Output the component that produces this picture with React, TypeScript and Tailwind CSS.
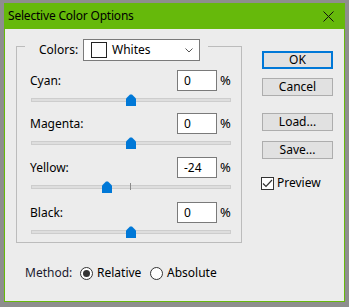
import React from 'react';

const font = { fontFamily: '"Noto Sans", "Open Sans", sans-serif' };

const rows = [
  { label: 'Cyan:', value: 0, mt: 'mt-[9px]', tick: false },
  { label: 'Magenta:', value: 0, mt: 'mt-[7px]', tick: false },
  { label: 'Yellow:', value: -24, mt: 'mt-[8px]', tick: true },
  { label: 'Black:', value: 0, mt: 'mt-[9px]', tick: false },
];

function Slider({ value, tick }: { value: number; tick: boolean }) {
  const pct = (value + 100) / 2;
  return (
    <div className="relative mt-[3px] ml-[1px] h-[12px] w-[200px]">
      <div className="absolute left-0 right-0 top-[4px] h-[4px] border border-[#cdcdcd] bg-[#dedede]" />
      {tick && <div className="absolute left-[99px] top-[2px] h-[7px] w-px bg-[#8a8a8a]" />}
      <svg
        className="absolute top-0"
        style={{ left: `calc(${pct}% - 5px)` }}
        width="10"
        height="12"
        viewBox="0 0 10 12"
      >
        <path d="M0 4.5 L4 0.5 H6 L10 4.5 V12 H0 Z" fill="#0078d7" />
      </svg>
    </div>
  );
}

function Radio({ checked }: { checked: boolean }) {
  return (
    <div className="flex h-[13px] w-[13px] items-center justify-center rounded-full border border-[#333333] bg-white">
      {checked && <div className="h-[7px] w-[7px] rounded-full bg-[#333333]" />}
    </div>
  );
}

function Button({ label, primary }: { label: string; primary?: boolean }) {
  return (
    <div
      className={
        primary
          ? 'flex h-[18px] w-[71px] items-center justify-center border-2 border-[#0078d7] bg-[#e1e1e1] text-[12px] text-black'
          : 'flex h-[18px] w-[71px] items-center justify-center border border-[#adadad] bg-[#e1e1e1] text-[12px] text-black'
      }
    >
      {label}
    </div>
  );
}

export default function App() {
  return (
    <div className="h-[307px] w-[349px] bg-[#8e8e8e] pl-[4px] pt-[3px]" style={font}>
      <div className="flex h-[299px] w-[341px] flex-col">
        {/* Title bar */}
        <div className="flex h-[26px] items-center justify-between bg-[#66b90b] pl-[4px] pr-[11px]">
          <span className="text-[12px] tracking-[-0.2px] text-black">Selective Color Options</span>
          <svg width="11" height="11" viewBox="0 0 11 11">
            <path d="M0.5 0.5 L10.5 10.5 M10.5 0.5 L0.5 10.5" stroke="#111" strokeWidth="1" />
          </svg>
        </div>

        {/* Body */}
        <div className="flex flex-1 items-start border-x border-b border-[#66b90b] bg-[#ececec] pl-[11px] pt-[17px]">
          <div className="flex flex-col">
            {/* Group box */}
            <div className="flex h-[197px] w-[226px] flex-col border border-[#bcbcbc] pl-[13px] pr-[9px]">
              <div className="-mt-[8px] ml-[-5px] flex h-[22px] w-fit items-center bg-[#ececec] pl-[14px] pr-[8px]">
                <span className="w-[44px] text-[12px] text-black">Colors:</span>
                <div className="flex h-[22px] w-[117px] items-center border border-[#7a7a7a] bg-white pl-[7px] pr-[6px]">
                  <div className="h-[16px] w-[16px] border border-[#222222] bg-white" />
                  <span className="ml-[5px] flex-1 text-[12px] text-black">Whites</span>
                  <svg width="8" height="5" viewBox="0 0 8 5">
                    <path d="M0.5 0.5 L4 4 L7.5 0.5" fill="none" stroke="#555" strokeWidth="1" />
                  </svg>
                </div>
              </div>

              {rows.map((r) => (
                <div key={r.label} className={r.mt}>
                  <div className="flex h-[21px] items-center">
                    <span className="flex-1 text-[12px] text-black">{r.label}</span>
                    <div className="flex h-[21px] w-[40px] items-center border border-[#7a7a7a] bg-white pl-[6px] text-[12px] text-black">
                      {r.value}
                    </div>
                    <span className="ml-[3px] w-[12px] text-[13px] text-black">%</span>
                  </div>
                  <Slider value={r.value} tick={r.tick} />
                </div>
              ))}
            </div>

            {/* Method */}
            <div className="ml-[9px] mt-[23px] flex h-[14px] items-center text-[12px] text-[#1a1a2e]">
              <span className="w-[55px]">Method:</span>
              <div className="flex w-[70px] items-center gap-[4px]">
                <Radio checked />
                <span className="text-black">Relative</span>
              </div>
              <div className="flex items-center gap-[4px]">
                <Radio checked={false} />
                <span className="text-black">Absolute</span>
              </div>
            </div>
          </div>

          {/* Buttons */}
          <div className="ml-[20px] mt-[5px] flex flex-col">
            <Button label="OK" primary />
            <div className="mt-[9px]">
              <Button label="Cancel" />
            </div>
            <div className="mt-[17px]">
              <Button label="Load..." />
            </div>
            <div className="mt-[10px]">
              <Button label="Save..." />
            </div>
            <div className="ml-[-1px] mt-[15px] flex items-center gap-[3px]">
              <div className="flex h-[13px] w-[13px] items-center justify-center border border-[#333333] bg-white">
                <svg width="11" height="9" viewBox="0 0 11 9">
                  <path d="M1 4.5 L4 7.5 L10 1" fill="none" stroke="#333" strokeWidth="1.2" />
                </svg>
              </div>
              <span className="text-[12px] text-black">Preview</span>
            </div>
          </div>
        </div>
      </div>
    </div>
  );
}
